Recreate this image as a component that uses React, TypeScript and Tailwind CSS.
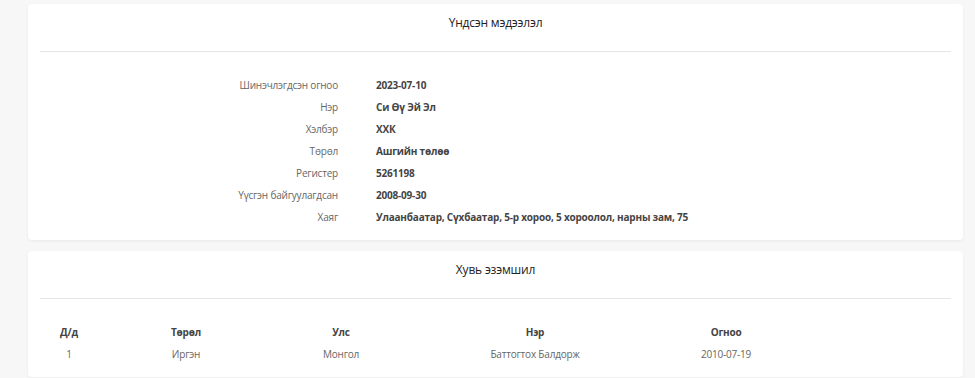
import React from "react";

const INFO = [
  { label: "Шинэчлэгдсэн огноо", value: "2023-07-10" },
  { label: "Нэр", value: "Си Өү Эй Эл" },
  { label: "Хэлбэр", value: "ХХК" },
  { label: "Төрөл", value: "Ашгийн төлөө" },
  { label: "Регистер", value: "5261198" },
  { label: "Үүсгэн байгуулагдсан", value: "2008-09-30" },
  { label: "Хаяг", value: "Улаанбаатар, Сүхбаатар, 5-р хороо, 5 хороолол, нарны зам, 75" },
];

const COLS = ["Д/д", "Төрөл", "Улс", "Нэр", "Огноо", ""];
const ROWS = [["1", "Иргэн", "Монгол", "Баттогтох Балдорж", "2010-07-19", ""]];

function CardHeader({ title }: { title: string }) {
  return (
    <div className="mx-3 h-[48px] pt-[10px] flex justify-center border-b border-[#e6e6e6]">
      <h2 className="text-[12px] leading-[18px] tracking-[-0.2px] text-[#222]">{title}</h2>
    </div>
  );
}

export default function App() {
  return (
    <div
      className="min-h-screen bg-[#f7f7f7] pl-[28px] pr-[12px] pt-[4px] flex flex-col gap-[11px]"
      style={{ fontFamily: '"Open Sans", "Noto Sans", sans-serif' }}
    >
      {/* Basic info */}
      <section className="bg-white rounded-[4px] shadow-[0_1px_3px_rgba(0,0,0,0.06)]">
        <CardHeader title="Үндсэн мэдээлэл" />
        <div className="pt-[22px] pb-[12px] grid grid-cols-[310px_1fr] gap-x-[38px] text-[10px] tracking-[-0.2px]">
          {INFO.map((r) => (
            <React.Fragment key={r.label}>
              <div className="h-[22px] flex items-center justify-end text-[#666]">{r.label}</div>
              <div className="h-[22px] flex items-center font-bold text-[#444]">{r.value}</div>
            </React.Fragment>
          ))}
        </div>
      </section>

      {/* Ownership */}
      <section className="bg-white rounded-[4px] shadow-[0_1px_3px_rgba(0,0,0,0.06)]">
        <CardHeader title="Хувь эзэмшил" />
        <div className="mx-3 pt-[22px] pb-[12px] text-[10px] tracking-[-0.2px]">
          <div className="grid grid-cols-[58px_176px_134px_254px_128px_1fr]">
            {COLS.map((c, i) => (
              <div key={i} className="h-[22px] flex items-center justify-center font-bold text-[#444]">
                {c}
              </div>
            ))}
            {ROWS.map((row) =>
              row.map((cell, i) => (
                <div key={i} className="h-[22px] flex items-center justify-center text-[#666]">
                  {cell}
                </div>
              ))
            )}
          </div>
        </div>
      </section>
    </div>
  );
}
